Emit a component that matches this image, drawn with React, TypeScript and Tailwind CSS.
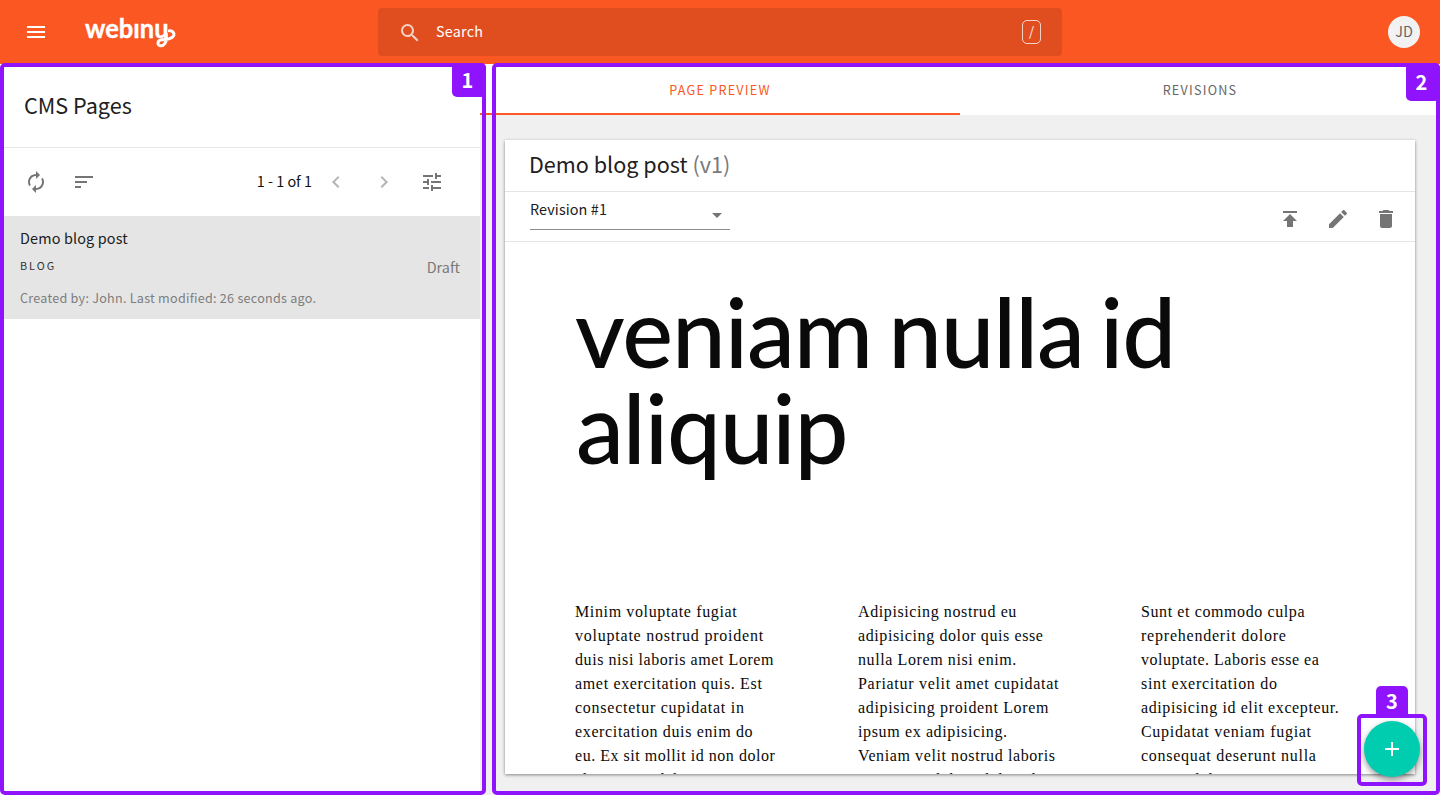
import {
  MdAdd, MdArrowDropDown, MdAutorenew, MdChevronLeft, MdChevronRight,
  MdDelete, MdEdit, MdMenu, MdPublish, MdSearch, MdSort, MdTune,
} from "react-icons/md";

type Line = { text: string; tracking?: string };

const columns: Line[][] = [
  [
    { text: "Minim voluptate fugiat", tracking: "tracking-[0.63px]" },
    { text: "voluptate nostrud proident", tracking: "tracking-[0.77px]" },
    { text: "duis nisi laboris amet Lorem", tracking: "tracking-[0.57px]" },
    { text: "amet exercitation quis. Est", tracking: "tracking-[0.66px]" },
    { text: "consectetur cupidatat in", tracking: "tracking-[0.74px]" },
    { text: "exercitation duis enim do", tracking: "tracking-[0.64px]" },
    { text: "eu. Ex sit mollit id non dolor", tracking: "tracking-[0.53px]" },
    { text: "aliqua amet laboris" },
  ],
  [
    { text: "Adipisicing nostrud eu" },
    { text: "adipisicing dolor quis esse" },
    { text: "nulla Lorem nisi enim." },
    { text: "Pariatur velit amet cupidatat", tracking: "tracking-[0.7px]" },
    { text: "adipisicing proident Lorem", tracking: "tracking-[0.65px]" },
    { text: "ipsum ex adipisicing.", tracking: "tracking-[0.63px]" },
    { text: "Veniam velit nostrud laboris" },
    { text: "consequat dolore dolor id" },
  ],
  [
    { text: "Sunt et commodo culpa" },
    { text: "reprehenderit dolore", tracking: "tracking-[0.78px]" },
    { text: "voluptate. Laboris esse ea", tracking: "tracking-[0.5px]" },
    { text: "sint exercitation do", tracking: "tracking-[0.7px]" },
    { text: "adipisicing id elit excepteur." },
    { text: "Cupidatat veniam fugiat", tracking: "tracking-[0.7px]" },
    { text: "consequat deserunt nulla", tracking: "tracking-[0.73px]" },
    { text: "magna dolor" },
  ],
];

function Logo() {
  return (
    <svg width="96" height="36" viewBox="0 0 96 36" className="ml-[36px]" role="img" aria-label="webiny">
      <text x="1" y="24" fontSize="26.5" fontWeight="700" fill="#fff" stroke="#fff" strokeWidth="0.4" strokeLinejoin="round" textLength="83.500" lengthAdjust="spacingAndGlyphs" fontFamily="Lato, sans-serif">webınu</text>
      <path d="M82.300 20v4.500c0 4-2.300 7.300-5.300 7.300c-4.200 0-4-5.600.5-6.100c5-.5 8 .2 11-2.500c3-2.800.8-7-3.200-6.500" fill="none" stroke="#fff" strokeWidth="3" strokeLinecap="round" />
    </svg>
  );
}

function Header() {
  return (
    <header className="grid h-16 shrink-0 grid-cols-[378px_684px_1fr] items-center bg-[#fa5723] text-white">
      <div className="flex items-center pl-6">
        <MdMenu size={24} />
        <Logo />
      </div>
      <div className="flex h-12 items-center rounded-[4px] bg-[#e04e1f] pl-5 pr-[21px]">
        <MdSearch size={24} className="mt-px opacity-75" />
        <span className="ml-[14px] flex-1 pb-0.5 text-[14.4px] tracking-[0.2px]">Search</span>
        <span className="flex h-6 w-[19px] items-center justify-center rounded-[5px] border border-white/75 pb-0.5 text-[13px] text-white/90">/</span>
      </div>
      <div className="flex justify-end pr-5">
        <span className="flex size-8 items-center justify-center rounded-full bg-[#f2f2f2] pb-0.5 text-[14.4px] text-[#666]">JD</span>
      </div>
    </header>
  );
}

function PageList() {
  return (
    <aside className="flex w-[480px] shrink-0 flex-col bg-white">
      <h1 className="flex h-[84px] items-center border-b border-[#e6e6e6] pl-6 text-[21.6px] text-[#202020]">CMS Pages</h1>
      <div className="flex h-[68px] items-center pl-6 pr-[36px] text-[#757575]">
        <MdAutorenew size={24} />
        <MdSort size={24} className="ml-6" />
        <span className="ml-auto pb-0.5 text-[14.4px] text-[#111]">1 - 1 of 1</span>
        <MdChevronLeft size={24} className="ml-3 text-[#b5b5b5]" />
        <MdChevronRight size={24} className="ml-6 text-[#b5b5b5]" />
        <MdTune size={24} className="ml-6" />
      </div>
      <div className="flex h-[103px] items-center justify-between bg-[#e5e5e5] px-5">
        <div className="flex flex-col">
          <span className="text-[14.4px] leading-6 tracking-[0.15px] text-[#202020]">Demo blog post</span>
          <span className="mt-[3px] text-[10.8px] leading-6 tracking-[2px] text-[#333]">BLOG</span>
          <span className="mt-[9px] text-[12.6px] leading-6 tracking-[0.25px] text-[#7d7d7d]">Created by: John. Last modified: 26 seconds ago.</span>
        </div>
        <span className="pb-0.5 text-[14.4px] text-[#7a7a7a]">Draft</span>
      </div>
    </aside>
  );
}

function Article() {
  return (
    <article className="flex h-[634px] flex-col overflow-hidden bg-white shadow-[0_1px_3px_rgba(0,0,0,0.45)]">
      <h2 className="flex h-[52px] shrink-0 items-center border-b border-[#e4e4e4] pb-0.5 pl-6 text-[21.6px] text-[#202020]">
        <span>Demo blog post <span className="text-[#7a7a7a]">(v1)</span></span>
      </h2>
      <div className="flex h-[50px] shrink-0 items-start border-b border-[#e4e4e4] pl-[25px] pr-[17px] text-[#757575]">
        <div className="flex h-[38px] w-[200px] items-center justify-between border-b border-[#8c8c8c] pr-px">
          <span className="pb-[3px] text-[14.4px] tracking-[0.1px] text-[#202020]">Revision #1</span>
          <MdArrowDropDown size={24} className="mt-[9px]" />
        </div>
        <div className="ml-auto flex gap-6 pt-[15px]">
          <MdPublish size={24} />
          <MdEdit size={24} />
          <MdDelete size={24} />
        </div>
      </div>
      <div className="px-[70px] pt-[41px] text-[#0a0a0a]">
        <h3 className="h-[317px] whitespace-nowrap font-['Lato'] text-[96px] font-medium leading-[96px] tracking-[-1.1px] [word-spacing:-7px]">
          <span className="block">veniam nulla id</span>
          <span className="block pl-px">aliquip</span>
        </h3>
        <div className="grid grid-cols-[283px_283px_1fr] font-['Liberation_Serif'] text-[16px] leading-6 tracking-[0.6px]">
          {columns.map((lines) => (
            <p key={lines[0].text} className="whitespace-nowrap">
              {lines.map((line) => <span key={line.text} className={`block ${line.tracking ?? ""}`}>{line.text}</span>)}
            </p>
          ))}
        </div>
      </div>
    </article>
  );
}

export default function App() {
  return (
    <div className="relative flex h-[795px] w-[1440px] flex-col overflow-hidden bg-[#f0f0f0] font-['Noto_Sans_CJK_SC',sans-serif]">
      <Header />
      <div className="flex min-h-0 flex-1">
        <PageList />
        <main className="flex-1">
          <nav className="grid h-[51px] grid-cols-2 bg-white text-center text-[12.6px] leading-[52px] tracking-[1.25px]">
            <span className="h-[51px] border-b-2 border-[#fa5723] text-[#fa5723]">PAGE PREVIEW</span>
            <span className="h-[51px] text-[#666]">REVISIONS</span>
          </nav>
          <div className="pl-[25px] pr-[25px] pt-[25px]">
            <Article />
          </div>
        </main>
      </div>

      <div className="absolute left-0 top-[63px] h-[732px] w-[486px] rounded-[5px] border-4 border-[#9013fe]" />
      <div className="absolute left-[452px] top-[63px] flex h-[34px] w-[34px] items-center justify-center rounded-[5px] bg-[#9013fe] pr-[3px] text-[20px] font-bold text-white">1</div>
      <div className="absolute left-[492px] top-[63px] h-[732px] w-[948px] rounded-[5px] border-4 border-[#9013fe]" />
      <div className="absolute left-[1406px] top-[63px] flex h-[38px] w-[34px] items-center justify-center rounded-[5px] bg-[#9013fe] pr-[3px] text-[20px] font-bold text-white">2</div>
      <button className="absolute left-[1364px] top-[721px] flex size-14 items-center justify-center rounded-full bg-[#00ccb0] text-white shadow-[0_3px_6px_rgba(0,0,0,0.4)]">
        <MdAdd size={24} />
      </button>
      <div className="absolute left-[1357px] top-[714px] h-[72px] w-[70px] rounded-[5px] border-4 border-[#9013fe]" />
      <div className="absolute left-[1376px] top-[686px] flex h-[31px] w-[32px] items-center justify-center rounded-t-[5px] bg-[#9013fe] pb-0.5 text-[20px] font-bold text-white">3</div>
    </div>
  );
}
